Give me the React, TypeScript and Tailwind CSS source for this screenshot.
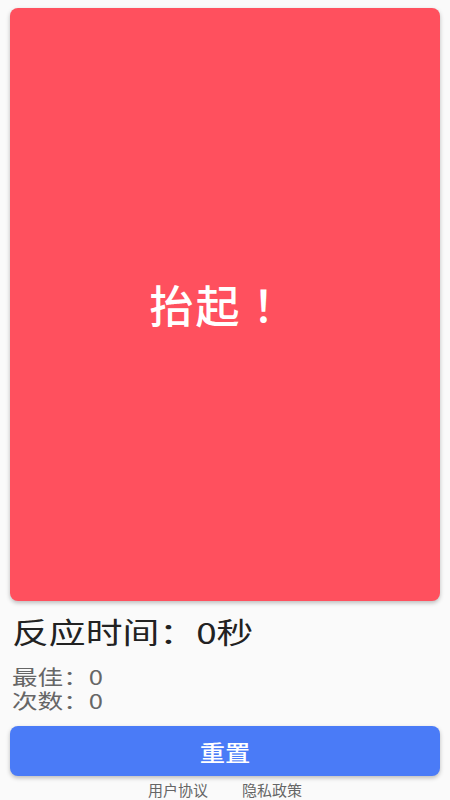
import React from "react";

export default function App() {
  const font = { fontFamily: '"Noto Sans CJK SC", "Noto Sans", sans-serif' };
  return (
    <div className="w-[450px] h-[800px] bg-[#fafafa] flex flex-col px-[10px] pt-[8px] overflow-hidden" style={font}>
      <div className="h-[593px] shrink-0 rounded-[8px] bg-[#ff505e] shadow-[0_2px_4px_rgba(0,0,0,0.25)] flex items-center justify-center">
        <span className="text-white text-[44px] font-medium leading-none tracking-[2px] mr-[13px] mt-[-2px] whitespace-nowrap">
          抬起<span style={{ fontFamily: '"Noto Sans CJK TC", sans-serif' }}>！</span>
        </span>
      </div>
      <div className="mt-[10px] pl-[2px] text-[29px] leading-[40px] text-[#222] whitespace-nowrap">
        <span className="inline-block origin-left scale-x-[1.27]">反应时间：0秒</span>
      </div>
      <div className="mt-[14px] pl-[2px] text-[20px] leading-[24px] text-[#666] whitespace-nowrap">
        <div><span className="inline-block origin-left scale-x-[1.28]">最佳：0</span></div>
        <div><span className="inline-block origin-left scale-x-[1.28]">次数：0</span></div>
      </div>
      <button className="mt-[13px] h-[50px] shrink-0 rounded-[8px] bg-[#4a7bf7] text-white text-[22px] font-medium shadow-[0_2px_4px_rgba(0,0,0,0.25)]">
        <span className="inline-block scale-x-[1.15]">重置</span>
      </button>
      <div className="mt-[5px] flex justify-center gap-[34px] text-[15px] leading-[18px] text-[#666] whitespace-nowrap">
        <span>用户协议</span>
        <span>隐私政策</span>
      </div>
    </div>
  );
}
